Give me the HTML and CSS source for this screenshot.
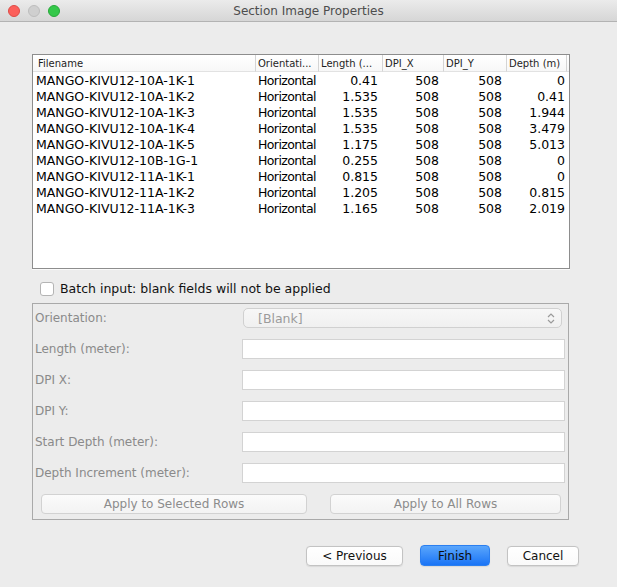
FILE: index.html
```html
<!DOCTYPE html>
<html>
<head>
<meta charset="utf-8">
<title>Section Image Properties</title>
<link rel="stylesheet" href="styles.css">
</head>
<body>
<div class="window">
  <div class="titlebar">
    <div class="lights">
      <span class="light red"></span>
      <span class="light grey"></span>
      <span class="light green"></span>
    </div>
    <div class="title">Section Image Properties</div>
    <div class="spacer"></div>
  </div>

  <div class="content">
    <div class="tablebox">
      <table class="grid">
        <colgroup>
          <col class="c-file"><col class="c-orient"><col class="c-len"><col class="c-dpix"><col class="c-dpiy"><col class="c-depth"><col class="c-rest">
        </colgroup>
        <thead>
          <tr>
            <th class="first">Filename</th>
            <th>Orientati...</th>
            <th>Length (...</th>
            <th>DPI_X</th>
            <th>DPI_Y</th>
            <th class="lastcol">Depth (m)</th>
            <th class="rest"></th>
          </tr>
        </thead>
        <tbody>
          <tr><td class="file">MANGO-KIVU12-10A-1K-1</td><td class="orient">Horizontal</td><td class="num">0.41</td><td class="num">508</td><td class="num">508</td><td class="num end">0</td><td></td></tr>
          <tr><td class="file">MANGO-KIVU12-10A-1K-2</td><td class="orient">Horizontal</td><td class="num">1.535</td><td class="num">508</td><td class="num">508</td><td class="num end">0.41</td><td></td></tr>
          <tr><td class="file">MANGO-KIVU12-10A-1K-3</td><td class="orient">Horizontal</td><td class="num">1.535</td><td class="num">508</td><td class="num">508</td><td class="num end">1.944</td><td></td></tr>
          <tr><td class="file">MANGO-KIVU12-10A-1K-4</td><td class="orient">Horizontal</td><td class="num">1.535</td><td class="num">508</td><td class="num">508</td><td class="num end">3.479</td><td></td></tr>
          <tr><td class="file">MANGO-KIVU12-10A-1K-5</td><td class="orient">Horizontal</td><td class="num">1.175</td><td class="num">508</td><td class="num">508</td><td class="num end">5.013</td><td></td></tr>
          <tr><td class="file">MANGO-KIVU12-10B-1G-1</td><td class="orient">Horizontal</td><td class="num">0.255</td><td class="num">508</td><td class="num">508</td><td class="num end">0</td><td></td></tr>
          <tr><td class="file">MANGO-KIVU12-11A-1K-1</td><td class="orient">Horizontal</td><td class="num">0.815</td><td class="num">508</td><td class="num">508</td><td class="num end">0</td><td></td></tr>
          <tr><td class="file">MANGO-KIVU12-11A-1K-2</td><td class="orient">Horizontal</td><td class="num">1.205</td><td class="num">508</td><td class="num">508</td><td class="num end">0.815</td><td></td></tr>
          <tr><td class="file">MANGO-KIVU12-11A-1K-3</td><td class="orient">Horizontal</td><td class="num">1.165</td><td class="num">508</td><td class="num">508</td><td class="num end">2.019</td><td></td></tr>
        </tbody>
      </table>
    </div>

    <div class="batch">
      <span class="check"></span>
      <span class="batch-text">Batch input: blank fields will not be applied</span>
    </div>

    <div class="formbox">
      <div class="formgrid">
        <div class="lbl">Orientation:</div>
        <div class="combo">
          <span class="combo-text">[Blank]</span>
          <svg class="combo-arrows" width="8" height="13" viewBox="0 0 8 13">
            <path d="M1 5 L4 2 L7 5" fill="none" stroke="#9a9a9a" stroke-width="1.2"/>
            <path d="M1 8 L4 11 L7 8" fill="none" stroke="#9a9a9a" stroke-width="1.2"/>
          </svg>
        </div>
        <div class="lbl">Length (meter):</div>
        <div class="field"></div>
        <div class="lbl">DPI X:</div>
        <div class="field"></div>
        <div class="lbl">DPI Y:</div>
        <div class="field"></div>
        <div class="lbl">Start Depth (meter):</div>
        <div class="field"></div>
        <div class="lbl">Depth Increment (meter):</div>
        <div class="field"></div>
      </div>
      <div class="applyrow">
        <div class="btn apply apply-sel">Apply to Selected Rows</div>
        <div class="btn apply apply-all">Apply to All Rows</div>
      </div>
    </div>

    <div class="footer">
      <div class="btn nav prev">&lt; Previous</div>
      <div class="btn nav finish">Finish</div>
      <div class="btn nav cancel">Cancel</div>
    </div>
  </div>
</div>
</body>
</html>
```

FILE: styles.css
```css
* { box-sizing: border-box; }

html, body {
  margin: 0;
  padding: 0;
  background: #ececec;
}

body {
  font-family: "DejaVu Sans", "Noto Sans", sans-serif;
  font-size: 12px;
  color: #000;
}

.window {
  width: 617px;
  height: 587px;
  background: #ececec;
  overflow: hidden;
}

/* ---------- title bar ---------- */
.titlebar {
  height: 22px;
  display: grid;
  grid-template-columns: 1fr auto 1fr;
  align-items: center;
  background: linear-gradient(#ebebeb, #d6d6d6);
  border-bottom: 1px solid #b3b3b3;
}

.lights {
  display: flex;
  gap: 8px;
  padding-left: 8px;
  padding-top: 1px;
}

.light {
  width: 12px;
  height: 12px;
  border-radius: 50%;
  display: block;
}
.light.red { background: #fc605b; border: 1px solid #de4b46; }
.light.grey { background: #cfcfcf; border: 1px solid #bdbdbd; }
.light.green { background: #34c84a; border: 1px solid #27a83a; }

.title {
  font-size: 12px;
  color: #4d4d4d;
  padding-top: 1px;
}

/* ---------- content ---------- */
.content {
  padding-left: 32px;
}

.tablebox {
  margin-top: 32px;
  width: 538px;
  height: 215px;
  background: #fff;
  border: 1px solid #8d8d8d;
  box-shadow: 0 1px 0 #fafafa;
  overflow: hidden;
}

.grid {
  width: 536px;
  table-layout: fixed;
  border-collapse: separate;
  border-spacing: 0;
}

.c-file { width: 222px; }
.c-orient { width: 63px; }
.c-len { width: 64px; }
.c-dpix { width: 61px; }
.c-dpiy { width: 63px; }
.c-depth { width: 61px; }
.c-rest { width: 2px; }

.grid th {
  height: 17px;
  padding: 0 0 0 2px;
  font-size: 10px;
  font-weight: normal;
  text-align: left;
  color: #1e1e1e;
  background: linear-gradient(#ffffff, #f7f7f7);
  border-bottom: 1px solid #e2e2e2;
  border-left: 1px solid #d4d4d4;
  white-space: nowrap;
  overflow: hidden;
}
.grid th.first { border-left: none; padding-left: 5px; }
.grid th.lastcol { border-right: 1px solid #d4d4d4; }
.grid th.rest { border-left: none; padding: 0; }

.grid td {
  height: 16px;
  line-height: 14px;
  padding: 2px 3px 0 3px;
  font-size: 12.5px;
  white-space: nowrap;
  overflow: hidden;
}
.grid td.file { padding-left: 3px; }
.grid td.orient { padding-left: 3px; letter-spacing: -0.6px; }
.grid td.num { text-align: right; padding-right: 4px; }
.grid td.end { padding-right: 2px; }
.grid td:last-child { padding: 0; }

/* ---------- batch checkbox ---------- */
.batch {
  margin-top: 13px;
  height: 14px;
  display: flex;
  align-items: center;
  padding-left: 8px;
  gap: 6px;
}

.check {
  width: 14px;
  height: 14px;
  background: #fff;
  border: 1px solid #b4b4b4;
  border-radius: 3px;
  flex: none;
}

.batch-text {
  font-size: 12.5px;
  color: #111;
  line-height: 14px;
}

/* ---------- form box ---------- */
.formbox {
  margin-top: 7px;
  width: 537px;
  border: 1px solid #a9a9a9;
  padding: 4px 3px 5px 2px;
}

.formgrid {
  display: grid;
  grid-template-columns: 207px 323px;
  grid-auto-rows: 20px;
  row-gap: 11px;
  align-items: center;
}

.lbl {
  color: #8a8a8a;
  font-size: 12px;
  line-height: 20px;
}

.field {
  height: 20px;
  background: #fff;
  border: 1px solid #d3d3d3;
}

.combo {
  height: 20px;
  width: 319px;
  margin-left: 1px;
  display: flex;
  align-items: center;
  justify-content: space-between;
  padding: 0 6px 0 14px;
  background: linear-gradient(#f7f7f7, #f0f0f0);
  border: 1px solid #d0d0d0;
  border-radius: 5px;
}

.combo-text {
  color: #9b9b9b;
  font-size: 12.5px;
}

.combo-arrows { display: block; }

.applyrow {
  margin-top: 11px;
  display: flex;
  gap: 23px;
  padding-left: 6px;
}

.btn {
  display: flex;
  align-items: center;
  justify-content: center;
  border-radius: 4px;
  white-space: nowrap;
}

.apply {
  height: 20px;
  background: linear-gradient(#fbfbfb, #f3f3f3);
  border: 1px solid #d2d2d2;
  color: #8c8c8c;
  font-size: 12px;
}
.apply-sel { width: 266px; }
.apply-all { width: 231px; }

/* ---------- footer buttons ---------- */
.footer {
  margin-top: 25px;
  display: flex;
  justify-content: flex-end;
  align-items: center;
  gap: 17px;
  padding-right: 38px;
}

.nav {
  height: 20px;
  font-size: 12px;
  color: #111;
  background: linear-gradient(#ffffff, #fafafa);
  border: 1px solid #c3c3c3;
  box-shadow: 0 0.5px 1px rgba(0,0,0,0.08);
}
.prev { width: 97px; }
.cancel { width: 72px; }
.finish {
  width: 70px;
  height: 21px;
  background: linear-gradient(#5aa6fc, #1a74f6);
  border: 1px solid #2b7ff0;
  color: #0c0c0c;
}
```
